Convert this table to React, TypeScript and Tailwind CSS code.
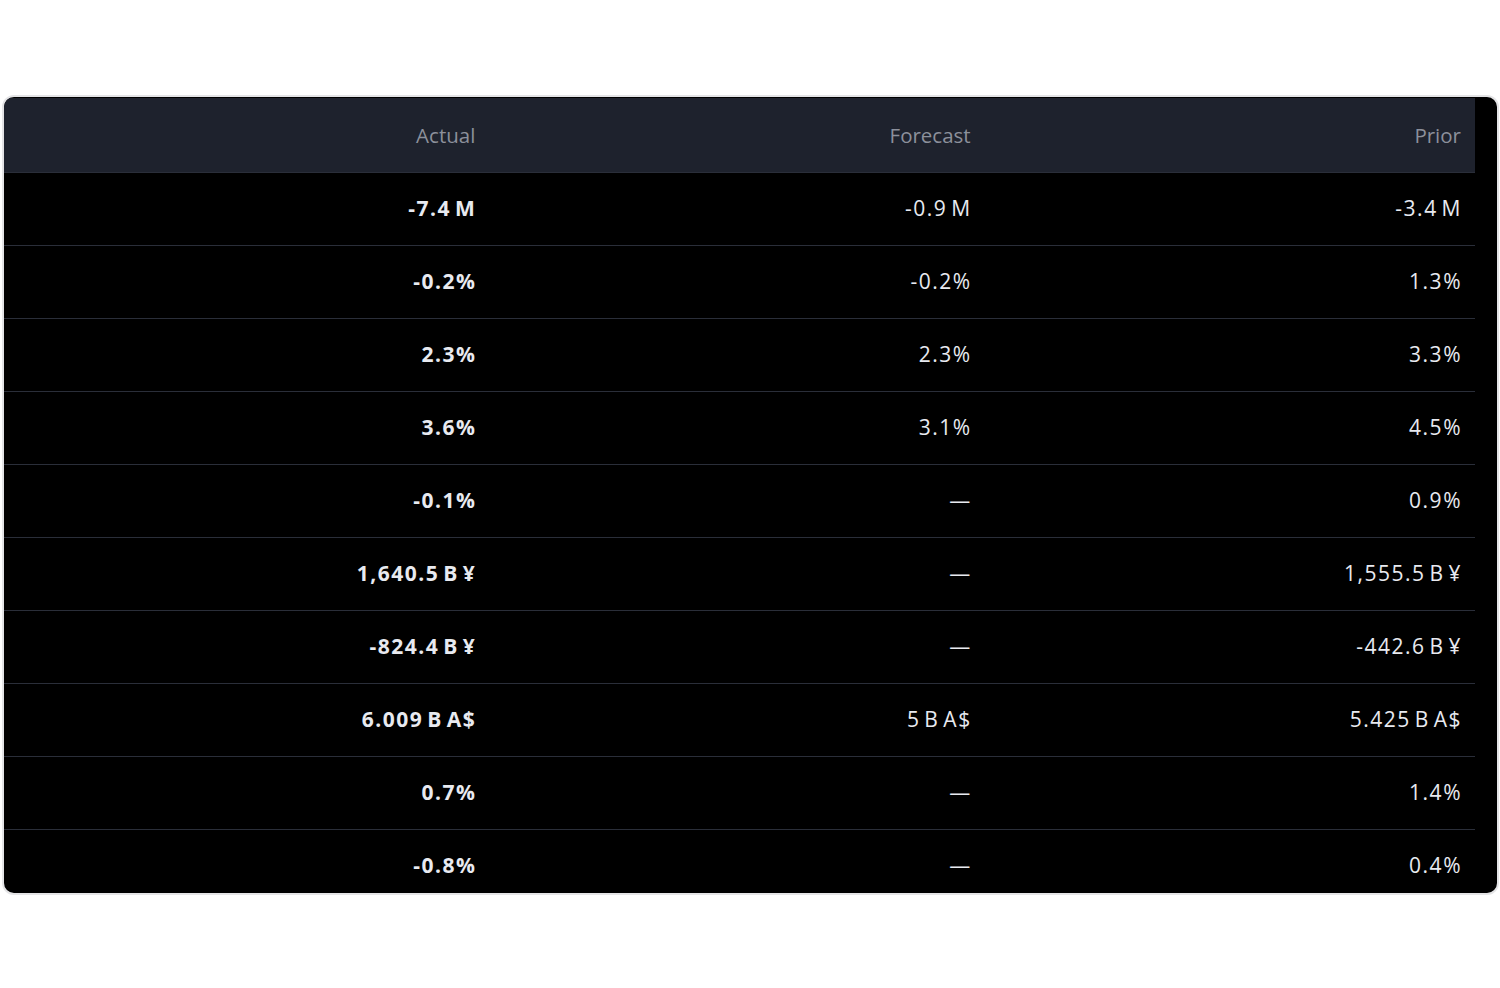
import React from "react";

const rows: [string, string, string][] = [
  ["-7.4 M", "-0.9 M", "-3.4 M"],
  ["-0.2%", "-0.2%", "1.3%"],
  ["2.3%", "2.3%", "3.3%"],
  ["3.6%", "3.1%", "4.5%"],
  ["-0.1%", "—", "0.9%"],
  ["1,640.5 B ¥", "—", "1,555.5 B ¥"],
  ["-824.4 B ¥", "—", "-442.6 B ¥"],
  ["6.009 B A$", "5 B A$", "5.425 B A$"],
  ["0.7%", "—", "1.4%"],
  ["-0.8%", "—", "0.4%"],
];

export default function App() {
  return (
    <div className="w-[1500px] h-[988px] bg-white pt-[95px] pl-[2px] font-['Open_Sans',sans-serif]">
      <div className="w-[1497px] h-[800px] rounded-[12px] border-2 border-[#e4e4e6] bg-black overflow-hidden">
        <div className="w-[1471px] h-full pt-[1px]">
          <div className="grid grid-cols-3 h-[75px] bg-[#1e222d] border-b border-[#2a2e39] text-[20.5px] text-[#8c909b]">
            <div className="flex items-center justify-end pr-[19px]">Actual</div>
            <div className="flex items-center justify-end pr-[14px]">Forecast</div>
            <div className="flex items-center justify-end pr-[14px]">Prior</div>
          </div>
          {rows.map((r, i) => (
            <div
              key={i}
              className="grid grid-cols-3 h-[73px] border-b border-[#2a2e39] text-[21px] tracking-[1.5px] [word-spacing:-3px] text-[#e8eaf0]"
            >
              <div className="flex items-center justify-end pr-[18px] font-bold">{r[0]}</div>
              <div className="flex items-center justify-end pr-[13px]">{r[1]}</div>
              <div className="flex items-center justify-end pr-[13px]">{r[2]}</div>
            </div>
          ))}
        </div>
      </div>
    </div>
  );
}
